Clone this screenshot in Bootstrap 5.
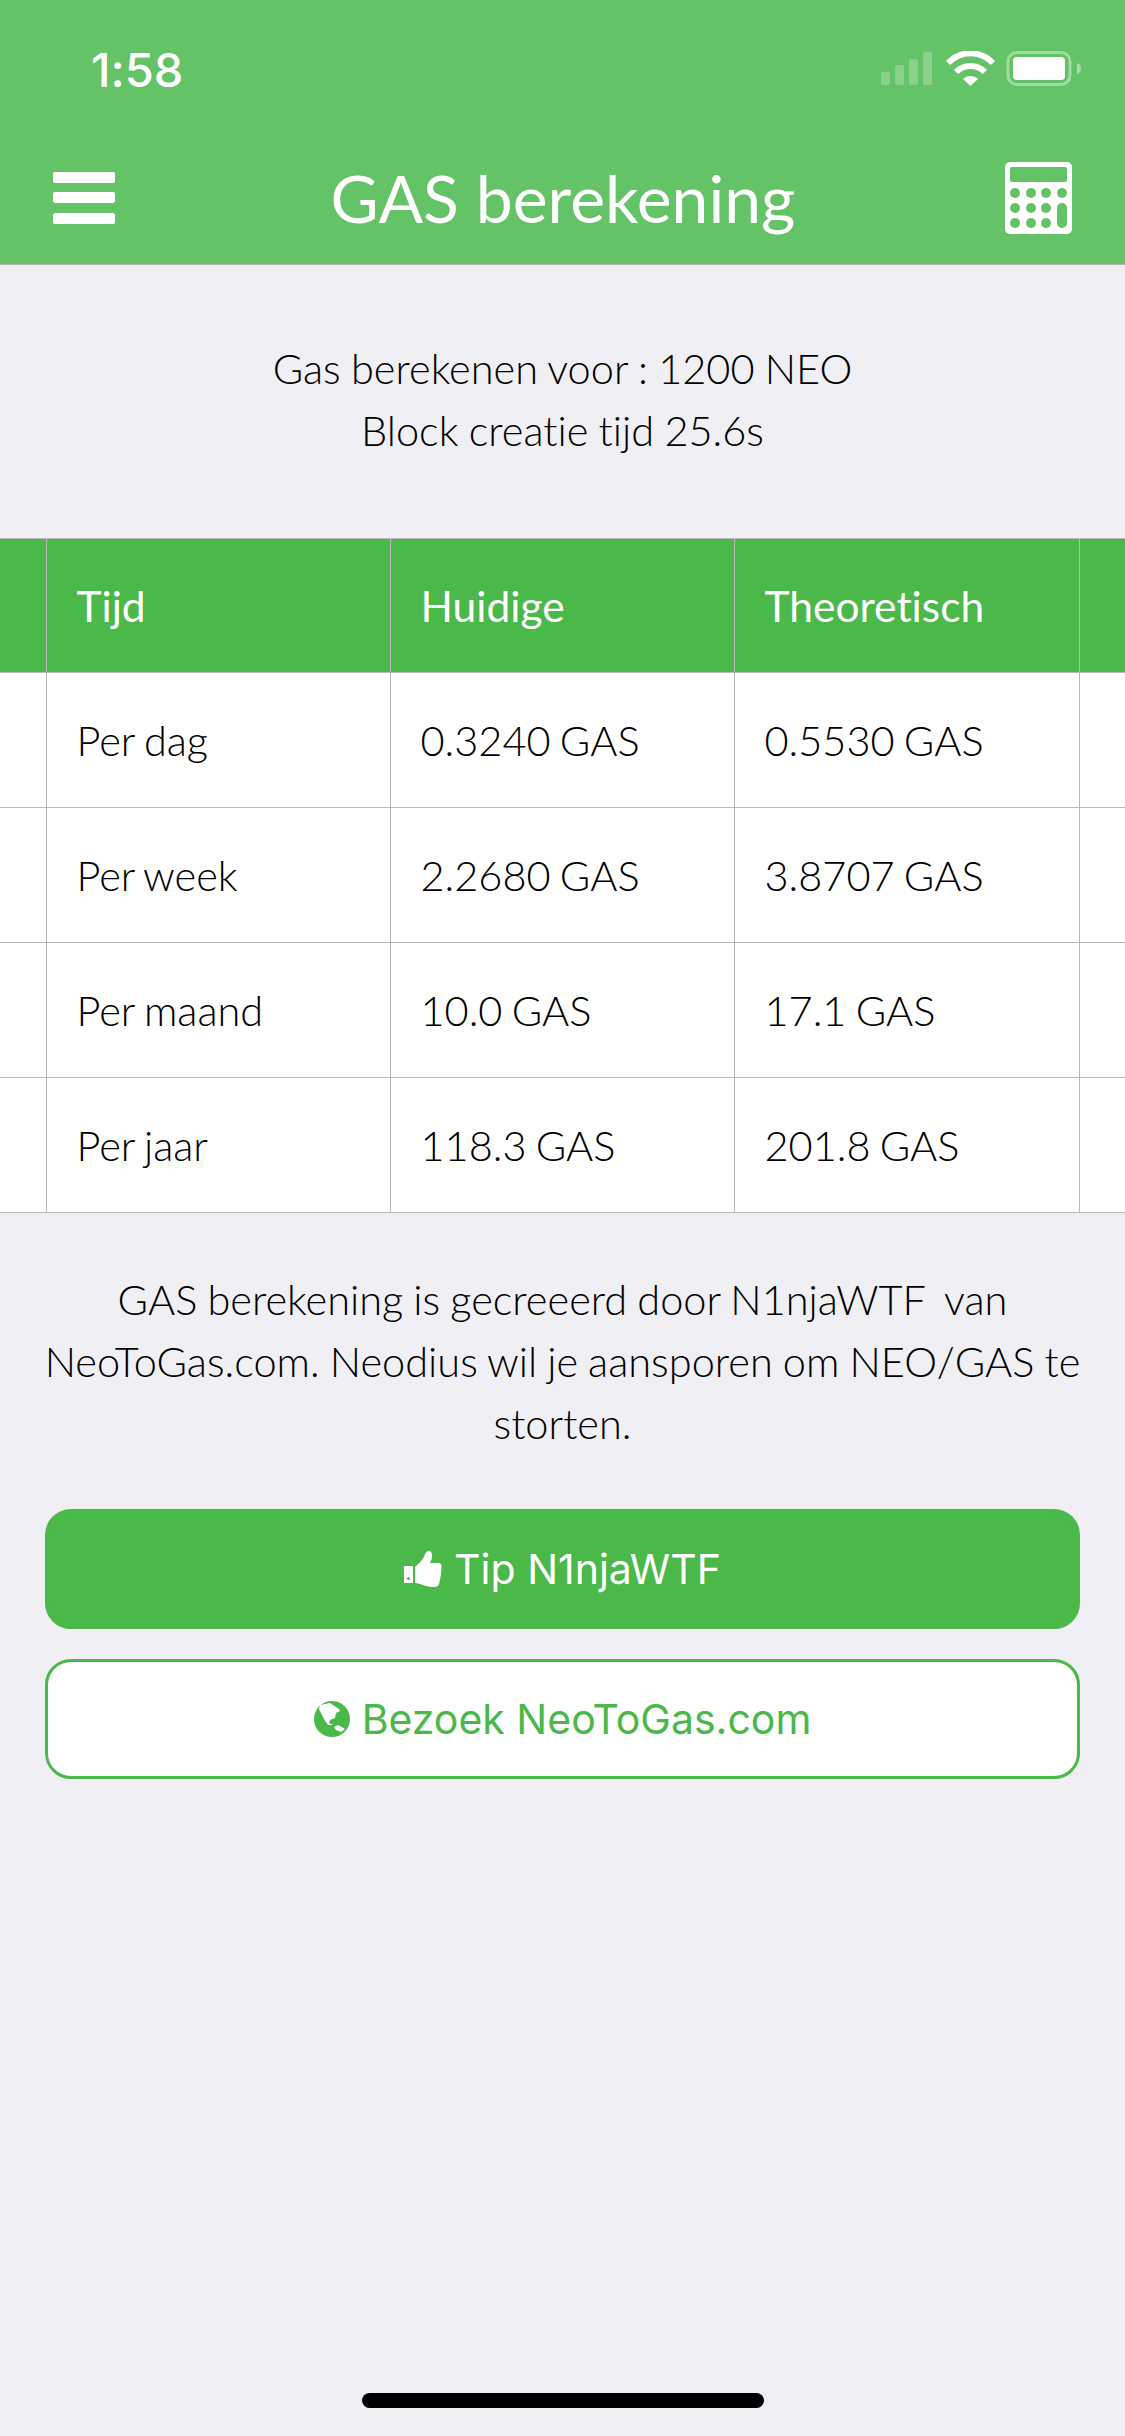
<!DOCTYPE html>
<html lang="nl">
<head>
    <meta charset="UTF-8">
    <meta name="viewport" content="width=device-width, initial-scale=1.0">
    <title>GAS berekening</title>
    <link href="https://cdn.jsdelivr.net/npm/bootstrap@5.3.0/dist/css/bootstrap.min.css" rel="stylesheet">
    <style>
        body {
            width: 1125px;
            height: 2436px;
            overflow: hidden;
            background: #efeff4;
            font-family: "Lato", "Liberation Sans", sans-serif;
            font-weight: 300;
            font-variant-ligatures: none;
            color: #000;
        }

        .app-head {
            height: 265px;
            background: #64c267;
            border-bottom: 1px solid #b5b5b5;
            color: #fff;
        }

        .status-row {
            height: 132px;
            padding: 6px 44px 0 91px;
        }

        .status-time {
            font-family: "Inter", "Liberation Sans", sans-serif;
            font-weight: 500;
            font-size: 47px;
            line-height: 1;
        }

        .title-row {
            height: 132px;
            padding: 0 53px;
        }

        .app-title {
            font-size: 66px;
            font-weight: 400;
            line-height: 1;
            margin: 0 0 0 6px;
        }

        .intro-text {
            height: 273px;
            padding-top: 72px;
            margin: 0;
            font-size: 41.5px;
            line-height: 62px;
            word-spacing: -1px;
            text-align: center;
        }

        .gas-table {
            table-layout: fixed;
            width: 1125px;
            margin: 0;
            --bs-table-bg: #fff;
            --bs-table-border-color: #b8b8b8;
            font-size: 41.5px;
            word-spacing: -2px;
        }

        .gas-table th,
        .gas-table td {
            height: 135px;
            padding: 0 30px;
            vertical-align: middle;
            border: 1px solid #b8b8b8;
            border-left: 0;
            font-weight: 300;
            white-space: nowrap;
            color: #000;
            background: #fff;
            box-shadow: none;
        }

        .gas-table th {
            height: 134px;
            background: #4bb84a;
            color: #fff;
            font-size: 42.5px;
            font-weight: 400;
        }

        .gas-table tr > :last-child {
            border-right: 0;
        }

        .outro-text {
            padding: 55px 30px 0;
            margin: 0 0 55px;
            font-size: 41.5px;
            line-height: 62px;
            word-spacing: -1.2px;
            text-align: center;
        }

        .btn-area {
            padding: 0 45px;
            gap: 30px;
        }

        .gas-btn {
            height: 120px;
            gap: 12px;
            border-radius: 26px;
            border: 3px solid #4bb84a;
            font-family: "Inter", "Liberation Sans", sans-serif;
            font-weight: 400;
            font-size: 41px;
            line-height: 1;
        }

        .gas-btn-fill {
            background: #4bb84a;
            color: #fff;
        }

        .gas-btn-line {
            background: #fff;
            color: #4bb84a;
        }

        .home-bar {
            position: absolute;
            left: 362px;
            top: 2393px;
            width: 402px;
            height: 15px;
            border-radius: 8px;
            background: #000;
        }
    </style>
</head>
<body>
    <!-- Header -->
    <div class="app-head">
        <div class="status-row d-flex justify-content-between align-items-center">
            <span class="status-time">1:58</span>
            <svg width="200" height="36" viewBox="0 0 200 36">
                <g fill="#fff" opacity=".25">
                    <rect x="0" y="21" width="9" height="13" rx="2"/>
                    <rect x="14" y="14" width="9" height="20" rx="2"/>
                    <rect x="28" y="8" width="9" height="26" rx="2"/>
                    <rect x="42" y="1" width="9" height="33" rx="2"/>
                </g>
                <g fill="none" stroke="#fff" stroke-width="6">
                    <path d="M67 12 C80 -1 99 -1 112 12"/>
                    <path d="M75 21 C83 13 96 13 104 21"/>
                </g>
                <path d="M82 28 C86 24 93 24 97 28 L89.500 35Z" fill="#fff"/>
                <rect x="127" y="1.500" width="62" height="32" rx="9" fill="none" stroke="#fff" stroke-opacity=".4" stroke-width="3"/>
                <rect x="132" y="6" width="52" height="23" rx="4" fill="#fff"/>
                <path d="M196 12 C199 13 200 15 200 17.500 C200 20 199 22 196 23Z" fill="#fff" fill-opacity=".45"/>
            </svg>
        </div>
        <div class="title-row d-flex justify-content-between align-items-center">
            <svg width="62" height="52" viewBox="0 0 62 52" fill="#fff">
                <rect y="0" width="62" height="11" rx="2"/>
                <rect y="20" width="62" height="11" rx="2"/>
                <rect y="41" width="62" height="11" rx="2"/>
            </svg>
            <h1 class="app-title">GAS berekening</h1>
            <svg width="67" height="72" viewBox="0 0 67 72">
                <path fill="#fff" d="M5 0H62A5 5 0 0 1 67 5V67A5 5 0 0 1 62 72H5A5 5 0 0 1 0 67V5A5 5 0 0 1 5 0Z"/>
                <g fill="#64c267">
                    <rect x="5" y="5" width="57" height="15" rx="2"/>
                    <circle cx="10" cy="31" r="5"/><circle cx="26" cy="31" r="5"/><circle cx="41" cy="31" r="5"/><circle cx="57" cy="31" r="5"/>
                    <circle cx="10" cy="46" r="5"/><circle cx="26" cy="46" r="5"/><circle cx="41" cy="46" r="5"/>
                    <circle cx="10" cy="61" r="5"/><circle cx="26" cy="61" r="5"/><circle cx="41" cy="61" r="5"/>
                    <rect x="52" y="41" width="10" height="25" rx="5"/>
                </g>
            </svg>
        </div>
    </div>

    <p class="intro-text">Gas berekenen voor : 1200 NEO<br>Block creatie tijd 25.6s</p>

    <!-- Tabel -->
    <table class="table gas-table">
        <colgroup>
            <col style="width: 46px">
            <col style="width: 344px">
            <col style="width: 344px">
            <col style="width: 345px">
            <col style="width: 46px">
        </colgroup>
        <thead>
            <tr><th></th><th>Tijd</th><th>Huidige</th><th>Theoretisch</th><th></th></tr>
        </thead>
        <tbody>
            <tr><td></td><td>Per dag</td><td>0.3240 GAS</td><td>0.5530 GAS</td><td></td></tr>
            <tr><td></td><td>Per week</td><td>2.2680 GAS</td><td>3.8707 GAS</td><td></td></tr>
            <tr><td></td><td>Per maand</td><td>10.0 GAS</td><td>17.1 GAS</td><td></td></tr>
            <tr><td></td><td>Per jaar</td><td>118.3 GAS</td><td>201.8 GAS</td><td></td></tr>
        </tbody>
    </table>

    <p class="outro-text">GAS berekening is gecreeerd door N1njaWTF&nbsp; van NeoToGas.com. Neodius wil je aansporen om NEO/GAS te storten.</p>

    <div class="btn-area d-flex flex-column">
        <button type="button" class="btn gas-btn gas-btn-fill d-flex align-items-center justify-content-center">
            <svg width="38" height="36" viewBox="0 0 38 36" fill="#fff">
                <path d="M1 15H8A1 1 0 0 1 9 16V31A1 1 0 0 1 8 32H1A1 1 0 0 1 0 31V16A1 1 0 0 1 1 15Z"/>
                <circle cx="4.500" cy="27.500" r="1.500" fill="#4bb84a"/>
                <path d="M11 16C14 13 18 10 20 6C21 3 22 0 25 0C28 0 28.500 4 28 7C27.500 9 26.500 10 26 12H34C37 12 38 14 37.500 16C37 26 36 29 35 33C34.500 35 33 36 30 36C24 36 20 34 16 33C14 32.500 12 32 11 32Z"/>
            </svg>
            <span>Tip N1njaWTF</span>
        </button>
        <button type="button" class="btn gas-btn gas-btn-line d-flex align-items-center justify-content-center">
            <svg width="36" height="36" viewBox="0 0 36 36">
                <circle cx="18" cy="18" r="18" fill="#4bb84a"/>
                <path fill="#fff" d="M6 4L16 2L25 8L26 10L22 12L21 17L16 19L15 22L19 24L14 24L10 18L7 12L5 8Z"/>
                <path fill="#fff" d="M20 26L24 24L31 28L27 31L22 29Z"/>
            </svg>
            <span>Bezoek NeoToGas.com</span>
        </button>
    </div>

    <div class="home-bar"></div>

    <script src="https://cdn.jsdelivr.net/npm/bootstrap@5.3.0/dist/js/bootstrap.bundle.min.js"></script>
</body>
</html>
